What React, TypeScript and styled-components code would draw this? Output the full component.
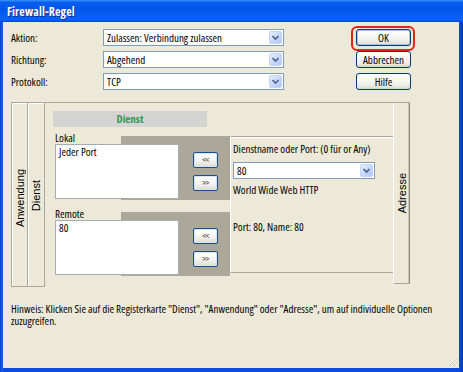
import React from "react";
import styled, { createGlobalStyle, css } from "styled-components";

const Global = createGlobalStyle`
  html, body { margin: 0; padding: 0; background: #ECE9D8; }
  body {
    font-family: 'Open Sans', 'Liberation Sans', sans-serif;
    font-stretch: condensed;
    font-size: 11px;
    color: #000;
  }
  * { box-sizing: border-box; }
`;

const Window = styled.div`
  width: 463px;
  height: 372px;
  display: flex;
  flex-direction: column;
  background: linear-gradient(to right, #0A3FD2 0px, #1A5EEA 2px, #0B4BDD 4px, #0B4BDD 459px, #0838C6 463px);
  overflow: hidden;
`;

const TitleBar = styled.div`
  height: 22px;
  flex: none;
  display: flex;
  align-items: center;
  padding-left: 7px;
  background: linear-gradient(180deg, #3D95FF 0%, #0A5FEF 10%, #0055EA 45%, #0A62F4 85%, #0A5AEB 94%, #0040D0 100%);
  color: #fff;
  font-weight: 700;
  font-size: 12px;
  letter-spacing: 0.1px;
  text-shadow: 1px 1px 0 #0A2A8A;
`;

const Body = styled.div`
  position: relative;
  flex: 1;
  margin: 0 4px 4px 3px;
  background: #ECE9D8;
  padding: 7px 0 0 8px;
  display: flex;
  flex-direction: column;
`;

const TopForm = styled.div`
  display: grid;
  grid-template-columns: 92px 181px 72px 55px;
  grid-auto-rows: 17px;
  row-gap: 5px;
  align-items: center;
`;

const FieldLabel = styled.span`
  line-height: 17px;
  white-space: nowrap;
`;

const Combo = styled.div<{ $w: number }>`
  width: ${(p) => p.$w}px;
  height: 17px;
  background: #fff;
  border: 1px solid #7F9DB9;
  display: flex;
  align-items: center;
  padding: 0 1px 0 3px;
`;

const ComboText = styled.span`
  flex: 1;
  white-space: nowrap;
  overflow: hidden;
  line-height: 15px;
`;

const ComboArrow = styled.span`
  width: 13px;
  height: 13px;
  border: 1px solid #C3D3FD;
  border-radius: 2px;
  background: linear-gradient(135deg, #E6EEFF 0%, #C6D6FC 55%, #B2C7F7 100%);
  display: flex;
  align-items: center;
  justify-content: center;
`;

const PushButton = styled.button<{ $default?: boolean }>`
  position: relative;
  width: 55px;
  height: 17px;
  padding: 0;
  font: inherit;
  font-size: 11px;
  color: #000;
  border: 1px solid #003C74;
  border-radius: 3px;
  background: linear-gradient(to bottom, #FFFFFF 0%, #F7F7F3 45%, #ECEBE4 80%, #D8D3C8 100%);
  line-height: 15px;
  ${(p) =>
    p.$default &&
    css`
      box-shadow: inset 0 0 0 1px #A9C3EE;
      &::after {
        content: "";
        position: absolute;
        left: -6px;
        right: -5px;
        top: -4px;
        bottom: -6px;
        border: 2px solid #E2231A;
        border-radius: 6px;
      }
    `}
`;

const TabFrame = styled.div`
  margin-top: 12px;
  width: 399px;
  height: 185px;
  display: flex;
  align-items: flex-start;
  border-top: 1px solid #ACA899;
`;

const SideTab = styled.div<{ $w: number; $right?: boolean }>`
  width: ${(p) => p.$w}px;
  height: 184px;
  flex: none;
  display: flex;
  align-items: center;
  justify-content: center;
  border-left: 1px solid #ACA899;
  border-bottom: 1px solid #ACA899;
  box-shadow: inset 1px 1px 0 #FFFFFF;
  ${(p) =>
    p.$right &&
    css`
      height: 181px;
      border-left: 1px solid #FFFFFF;
      border-right: 1px solid #8A877A;
      box-shadow: inset -1px 0 0 #CBC7B8;
    `}
`;

const TabLabel = styled.span<{ $shift?: number }>`
  writing-mode: vertical-rl;
  transform: rotate(180deg);
  margin-top: ${(p) => p.$shift ?? 0}px;
  font-family: 'Liberation Sans', sans-serif;
  font-stretch: normal;
  font-size: 11px;
  white-space: nowrap;
`;

const Content = styled.div`
  flex: 1;
  height: 184px;
  border-left: 1px solid #ACA899;
  padding: 8px 0 0 8px;
  display: flex;
  flex-direction: column;
`;

const HeaderBar = styled.div`
  width: 154px;
  height: 16px;
  background: #D4D4D2;
  color: #2E9A55;
  font-weight: 700;
  font-size: 11px;
  line-height: 16px;
  text-align: center;
`;

const BodyRow = styled.div`
  margin-top: 9px;
  margin-left: -8px;
  display: flex;
  align-items: flex-start;
`;

const LeftCol = styled.div`
  width: 185px;
  display: flex;
  flex-direction: column;
`;

const Section = styled.div<{ $gap?: number }>`
  height: 64px;
  margin-top: ${(p) => p.$gap ?? 0}px;
  display: flex;
  background: linear-gradient(to right, transparent 76px, #ACA899 76px);
`;

const ListCol = styled.div`
  padding-left: 10px;
  display: flex;
  flex-direction: column;
`;

const SmallLabel = styled.span`
  margin-top: -4px;
  height: 12px;
  line-height: 11px;
  white-space: nowrap;
`;

const ListBox = styled.div`
  width: 124px;
  height: 55px;
  background: #fff;
  border: 1px solid #A5ACB2;
  padding: 1px 3px;
  line-height: 11px;
`;

const ArrowCol = styled.div`
  margin-left: 14px;
  padding-top: 16px;
  display: flex;
  flex-direction: column;
  gap: 7px;
`;

const MoveButton = styled.button`
  width: 25px;
  height: 16px;
  padding: 0;
  border: 1px solid #1C4E8E;
  border-radius: 2px;
  background: linear-gradient(to bottom, #FFFFFF 0%, #F4F4F0 55%, #DEDBD0 100%);
  box-shadow: inset 0 0 0 1px #D7E3F8;
  font: inherit;
  font-size: 9px;
  line-height: 12px;
  color: #3A3A3A;
  letter-spacing: -0.5px;
`;

const RightPanel = styled.div`
  flex: 1;
  height: 137px;
  border-top: 1px solid #ACA899;
  border-bottom: 1px solid #ACA899;
  border-left: 1px solid #FFFFFF;
  box-shadow: inset 0 1px 0 #FFFFFF;
  padding: 6px 0 0 2px;
  display: flex;
  flex-direction: column;
`;

const PanelText = styled.div<{ $gap?: number }>`
  margin-top: ${(p) => p.$gap ?? 0}px;
  line-height: 11px;
  white-space: nowrap;
`;

const ComboSpacer = styled.div`
  margin-top: 8px;
`;

const Hint = styled.p`
  margin: 16px 0 0;
  width: 425px;
  line-height: 12px;
`;

const Grip = styled.svg`
  position: absolute;
  right: 1px;
  bottom: 1px;
`;

function Chevron() {
  return (
    <svg width="9" height="7" viewBox="0 0 9 7">
      <polyline points="1.5,2 4.5,5 7.5,2" fill="none" stroke="#4D6185" strokeWidth="1.6" />
    </svg>
  );
}

function ComboBox({ value, width }: { value: string; width: number }) {
  return (
    <Combo $w={width}>
      <ComboText>{value}</ComboText>
      <ComboArrow>
        <Chevron />
      </ComboArrow>
    </Combo>
  );
}

function PortSection({ label, value, gap }: { label: string; value: string; gap?: number }) {
  return (
    <Section $gap={gap}>
      <ListCol>
        <SmallLabel>{label}</SmallLabel>
        <ListBox>{value}</ListBox>
      </ListCol>
      <ArrowCol>
        <MoveButton>{"<<"}</MoveButton>
        <MoveButton>{">>"}</MoveButton>
      </ArrowCol>
    </Section>
  );
}

export default function App() {
  return (
    <>
      <Global />
      <Window>
        <TitleBar>Firewall-Regel</TitleBar>
        <Body>
          <TopForm>
            <FieldLabel>Aktion:</FieldLabel>
            <ComboBox value="Zulassen: Verbindung zulassen" width={181} />
            <span />
            <PushButton $default>OK</PushButton>

            <FieldLabel>Richtung:</FieldLabel>
            <ComboBox value="Abgehend" width={181} />
            <span />
            <PushButton>Abbrechen</PushButton>

            <FieldLabel>Protokoll:</FieldLabel>
            <ComboBox value="TCP" width={181} />
            <span />
            <PushButton>Hilfe</PushButton>
          </TopForm>

          <TabFrame>
            <SideTab $w={16}>
              <TabLabel $shift={8}>Anwendung</TabLabel>
            </SideTab>
            <SideTab $w={17}>
              <TabLabel $shift={2}>Dienst</TabLabel>
            </SideTab>
            <Content>
              <HeaderBar>Dienst</HeaderBar>
              <BodyRow>
                <LeftCol>
                  <PortSection label="Lokal" value="Jeder Port" />
                  <PortSection label="Remote" value="80" gap={12} />
                </LeftCol>
                <RightPanel>
                  <PanelText>Dienstname oder Port: (0 für or Any)</PanelText>
                  <ComboSpacer>
                    <ComboBox value="80" width={142} />
                  </ComboSpacer>
                  <PanelText $gap={5}>World Wide Web HTTP</PanelText>
                  <PanelText $gap={26}>Port: 80, Name: 80</PanelText>
                </RightPanel>
              </BodyRow>
            </Content>
            <SideTab $w={17} $right>
              <TabLabel>Adresse</TabLabel>
            </SideTab>
          </TabFrame>

          <Hint>
            Hinweis: Klicken Sie auf die Registerkarte "Dienst", "Anwendung" oder "Adresse", um auf individuelle Optionen
            zuzugreifen.
          </Hint>

          <Grip width="12" height="12" viewBox="0 0 12 12">
            <g stroke="#FFFFFF" strokeWidth="1">
              <line x1="11" y1="2" x2="2" y2="11" />
              <line x1="11" y1="6" x2="6" y2="11" />
              <line x1="11" y1="10" x2="10" y2="11" />
            </g>
            <g stroke="#C7C3B2" strokeWidth="1">
              <line x1="11" y1="3" x2="3" y2="11" />
              <line x1="11" y1="7" x2="7" y2="11" />
            </g>
          </Grip>
        </Body>
      </Window>
    </>
  );
}
